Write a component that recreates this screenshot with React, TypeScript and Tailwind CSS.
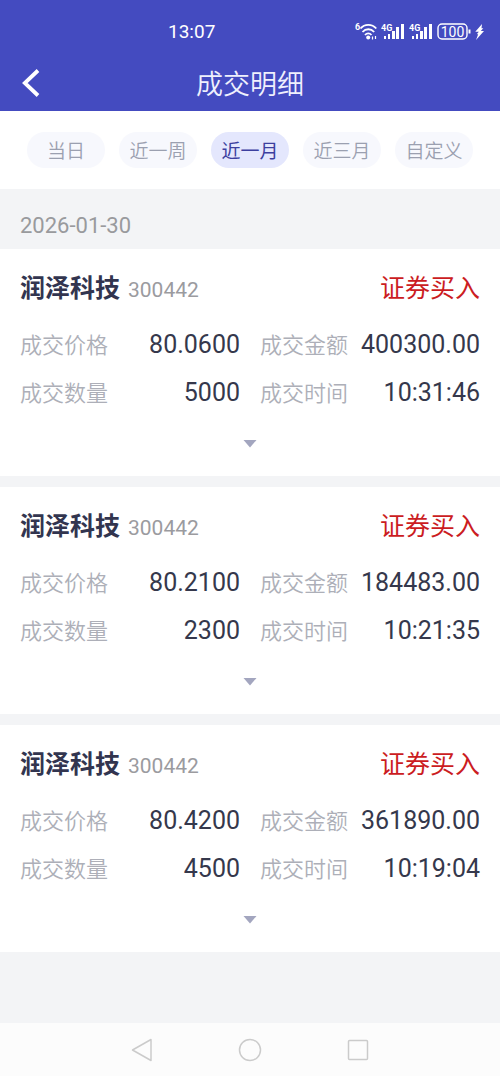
import { useState } from "react"

type Trade = {
  name: string
  code: string
  side: string
  price: string
  amount: string
  volume: string
  time: string
}

const ranges = ["当日", "近一周", "近一月", "近三月", "自定义"]

const trades: Trade[] = [
  {
    name: "润泽科技",
    code: "300442",
    side: "证券买入",
    price: "80.0600",
    amount: "400300.00",
    volume: "5000",
    time: "10:31:46",
  },
  {
    name: "润泽科技",
    code: "300442",
    side: "证券买入",
    price: "80.2100",
    amount: "184483.00",
    volume: "2300",
    time: "10:21:35",
  },
  {
    name: "润泽科技",
    code: "300442",
    side: "证券买入",
    price: "80.4200",
    amount: "361890.00",
    volume: "4500",
    time: "10:19:04",
  },
]

function Signal() {
  return (
    <svg width="24" height="20" viewBox="0 0 24 20" fill="currentColor" aria-hidden="true">
      <text x="0" y="9" className="text-[9px] font-bold">4G</text>
      <rect x="3" y="14" width="2" height="3" />
      <rect x="7" y="12" width="2" height="5" />
      <rect x="11" y="9" width="3" height="8" />
      <rect x="15" y="5" width="3" height="12" />
      <rect x="20" y="2" width="3" height="15" />
    </svg>
  )
}

function StatusBar() {
  return (
    <div className="flex h-[55px] items-center pt-2 pr-4 pl-[168px]">
      <span className="text-[19px] leading-6">13:07</span>
      <div className="ml-auto flex items-center gap-1">
        <svg width="22" height="20" viewBox="0 0 22 20" fill="none" stroke="currentColor" strokeWidth="1.8" aria-hidden="true">
          <text x="0" y="8" fill="currentColor" stroke="none" className="text-[9px] font-bold">6</text>
          <path d="M5.500 6.500C9.500 1.600 17 1.600 21.300 6.500" />
          <path d="M7.500 10C10.800 6.300 15.800 6.300 19.200 10" />
          <path d="M10 13C11.900 10.800 14.600 10.800 16.500 13" />
          <circle cx="13.200" cy="15.600" r="2" fill="currentColor" stroke="none" />
          <path d="M17.500 14.500v3M20.500 14v3" strokeWidth="1.2" />
        </svg>
        <Signal />
        <Signal />
        <svg width="34" height="20" viewBox="0 0 34 20" fill="none" stroke="currentColor" aria-hidden="true">
          <rect x="1" y="2" width="29" height="15" rx="4" strokeWidth="1.4" />
          <path d="M32.500 7.500v4" strokeWidth="2" />
          <text x="15.500" y="15" textAnchor="middle" fill="currentColor" stroke="none" className="text-[14px]">100</text>
        </svg>
        <svg width="9" height="20" viewBox="0 0 9 20" fill="currentColor" aria-hidden="true">
          <path d="M7 2 0.300 9.800H3.800L1.800 12.300H3.200L1 18 9 9H5.800L8.300 6.200H6.500Z" />
        </svg>
      </div>
    </div>
  )
}

function Field({ label, value }: { label: string; value: string }) {
  return (
    <div className="flex h-12 items-center justify-between">
      <dt className="text-[22px] font-[350] text-[#adafb8]">{label}</dt>
      <dd className="text-[25px] text-[#35384c]">{value}</dd>
    </div>
  )
}

function TradeCard({ trade }: { trade: Trade }) {
  return (
    <article className="bg-white px-5 pt-5 pb-[5px]">
      <div className="flex h-10 items-center justify-between">
        <div className="flex items-baseline gap-2">
          <h2 className="text-[25px] font-bold text-[#32354f]">{trade.name}</h2>
          <span className="text-[21px] text-[#9b9b9f]">{trade.code}</span>
        </div>
        <span className="text-[25px] text-[#cb1c22]">{trade.side}</span>
      </div>
      <dl className="mt-3 grid grid-cols-2 gap-x-5">
        <Field label="成交价格" value={trade.price} />
        <Field label="成交金额" value={trade.amount} />
        <Field label="成交数量" value={trade.volume} />
        <Field label="成交时间" value={trade.time} />
      </dl>
      <button type="button" aria-label="展开" className="flex h-[54px] w-full items-center justify-center">
        <svg width="14" height="8" viewBox="0 0 14 8" fill="#a3a6bf">
          <path d="M0.500 0h13L7 7.500Z" />
        </svg>
      </button>
    </article>
  )
}

export default function App() {
  const [range, setRange] = useState("近一月")

  return (
    <div className="flex min-h-screen flex-col bg-[#f3f4f6] font-[Roboto,'Noto_Sans_CJK_SC',sans-serif]">
      <header className="bg-[#444bc0] text-white">
        <StatusBar />
        <div className="grid h-14 grid-cols-[60px_1fr_60px] items-center">
          <button type="button" aria-label="返回" className="flex h-full items-center pl-[22px]">
            <svg width="18" height="28" viewBox="0 0 18 28" fill="none" stroke="currentColor" strokeWidth="3.800">
              <path d="M16 1.500 2.800 14 16 26.500" />
            </svg>
          </button>
          <h1 className="pt-1 text-center text-[27px] font-[350] text-[#eff0fd]">成交明细</h1>
        </div>
      </header>

      <nav className="flex h-[78px] items-center justify-between bg-white px-[27px]">
        {ranges.map((item) => (
          <button
            key={item}
            type="button"
            onClick={() => setRange(item)}
            className={`h-9 w-[78px] rounded-full pt-1 text-[19px] ${
              item === range ? "bg-[#e4e7fd] text-[#3c3f9f]" : "bg-[#f7f8fd] font-[350] text-[#9ba0b0]"
            }`}
          >
            {item}
          </button>
        ))}
      </nav>

      <main>
        <p className="flex h-[60px] items-center px-5 pt-3 text-[22px] text-[#999a9d]">2026-01-30</p>
        <div className="flex flex-col gap-[11px]">
          {trades.map((trade) => (
            <TradeCard key={trade.time} trade={trade} />
          ))}
        </div>
      </main>

      <footer className="mt-auto flex h-[53px] items-center justify-center gap-[84px] bg-[#fcfcfc] text-[#cbcbcb]">
        <button type="button" aria-label="后退">
          <svg width="24" height="24" viewBox="0 0 24 24" fill="none" stroke="currentColor" strokeWidth="1.500" strokeLinejoin="round">
            <path d="M21 1.500v21L2.500 12Z" />
          </svg>
        </button>
        <button type="button" aria-label="主页">
          <svg width="24" height="24" viewBox="0 0 24 24" fill="none" stroke="currentColor" strokeWidth="1.500">
            <circle cx="12" cy="12" r="10.500" />
          </svg>
        </button>
        <button type="button" aria-label="最近任务">
          <svg width="24" height="24" viewBox="0 0 24 24" fill="none" stroke="currentColor" strokeWidth="1.500">
            <rect x="2.500" y="2.500" width="19" height="19" rx="1" />
          </svg>
        </button>
      </footer>
    </div>
  )
}
